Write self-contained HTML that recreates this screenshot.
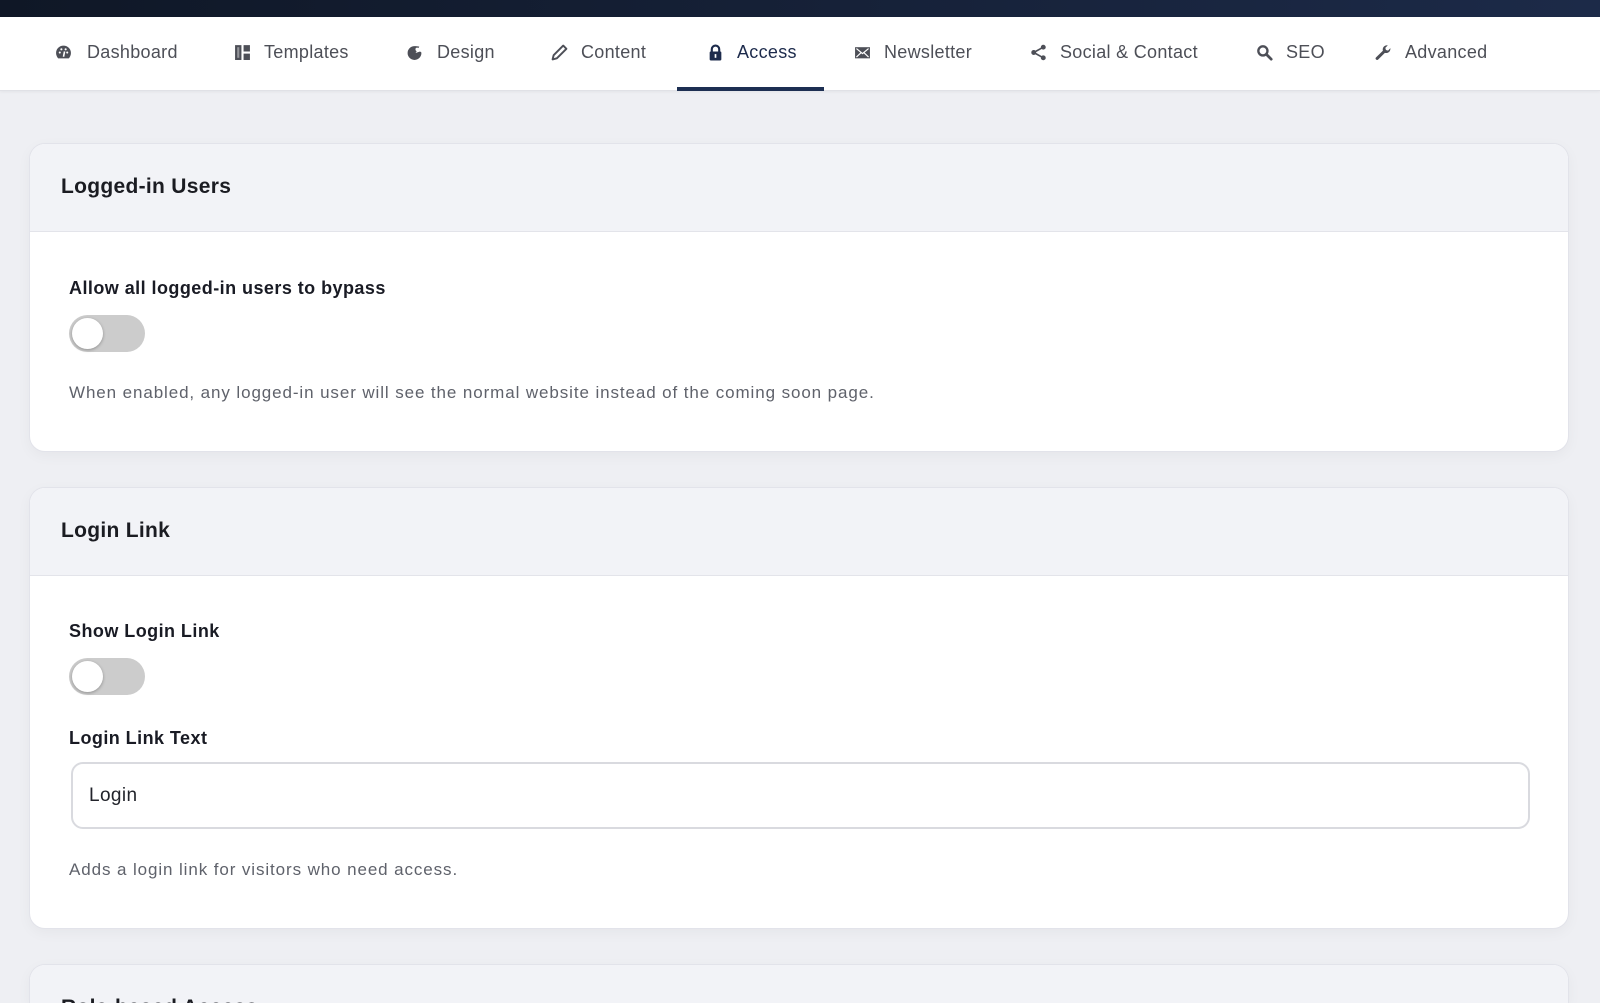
<!DOCTYPE html>
<html><head><meta charset="utf-8"><style>
*{box-sizing:border-box;margin:0;padding:0}
html{width:1600px;height:1003px;overflow:hidden}
body{width:1600px;height:1003px;overflow:hidden;background:#eeeff3;font-family:"Liberation Sans",sans-serif;position:relative}
.top{position:absolute;left:0;top:0;width:1600px;height:17px;background:linear-gradient(90deg,#0f1726,#1c2a48)}
.nav{position:absolute;left:0;top:17px;width:1600px;height:74px;background:#fff;border-bottom:1px solid #e0e1e6;box-shadow:0 1px 3px rgba(0,0,0,.05)}
.it{position:absolute;top:0;height:74px;line-height:70px;font-size:18px;color:#4d4f57;white-space:nowrap;letter-spacing:.3px}
.it svg{position:absolute;top:27px;width:17px;height:17px}
.it span{position:absolute;top:0}
.act{color:#1d2b4c}
.ul{position:absolute;left:677px;width:147px;height:4px;background:#1d2f52}
.card{position:absolute;left:29px;width:1540px;background:#fff;border:1px solid #e2e3ea;border-radius:16px;overflow:hidden;box-shadow:0 4px 14px rgba(0,0,0,.04)}
.hd{height:88px;background:#f2f3f7;border-bottom:1px solid #e3e4ea;padding-left:31px;line-height:86px;font-size:21px;font-weight:bold;color:#1b1c22;letter-spacing:.3px}
.lab{position:absolute;left:39px;font-size:18px;font-weight:bold;color:#191b24;letter-spacing:.45px}
.tog{position:absolute;left:39px;width:76px;height:37px;border-radius:19px;background:#cccccc}
.tog:after{content:"";position:absolute;left:3px;top:3px;width:31px;height:31px;border-radius:50%;background:#fff;box-shadow:0 1px 3px rgba(0,0,0,.3)}
.help{position:absolute;left:39px;font-size:17px;color:#5f626b;letter-spacing:.9px}
.inp{position:absolute;left:41px;width:1459px;height:67px;border:2px solid #d9dadf;border-radius:12px;font-size:19px;color:#22242b;padding-left:16px;line-height:63px;letter-spacing:.4px}
</style></head><body>
<div class="top"></div>
<div class="nav">
<div class="it" style="left:55px"><svg viewBox="0 0 16 16"><path d="M8 1.5A7 7 0 0 0 1 8.5c0 2 .8 3.7 2 5h10c1.2-1.3 2-3 2-5a7 7 0 0 0-7-7z" fill="#4d4f57"/><circle cx="4.5" cy="8" r="1" fill="#fff"/><circle cx="6" cy="5" r="1" fill="#fff"/><circle cx="11.5" cy="8" r="1" fill="#fff"/><circle cx="10" cy="5" r="1" fill="#fff"/><path d="M8 12l1-5" stroke="#fff" stroke-width="1.5"/></svg><span style="left:32px">Dashboard</span></div>
<div class="it" style="left:234px"><svg viewBox="0 0 16 16"><path d="M1 1h6v14H1zM9 1h6v6H9zM9 9h6v6H9z" fill="#4d4f57"/><path d="M3 3h2v10H3z" fill="#fff" opacity=".4"/></svg><span style="left:30px">Templates</span></div>
<div class="it" style="left:406px"><svg viewBox="0 0 16 16"><path d="M8 2a6.5 6.5 0 1 0 6.5 6.5c0-1-1-1.5-2-1.2L9 8.5 12.5 2.5C11 2 9.5 2 8 2z" fill="#4d4f57"/><circle cx="10.5" cy="5" r="1.6" fill="#fff"/></svg><span style="left:31px">Design</span></div>
<div class="it" style="left:551px"><svg viewBox="0 0 16 16"><path d="M11.5 1.5l3 3-9 9-4 1 1-4z" fill="none" stroke="#4d4f57" stroke-width="1.8" stroke-linejoin="round"/></svg><span style="left:30px">Content</span></div>
<div class="it act" style="left:707px"><svg viewBox="0 0 16 16"><path d="M4.5 7V5a3.5 3.5 0 0 1 7 0v2" fill="none" stroke="#1d2b4c" stroke-width="2"/><rect x="2.5" y="7" width="11" height="8.5" rx="1" fill="#1d2b4c"/><rect x="7.2" y="9.5" width="1.6" height="3.5" fill="#fff"/></svg><span style="left:30px">Access</span></div>
<div class="it" style="left:854px"><svg viewBox="0 0 16 16"><rect x="1" y="3" width="14" height="10.5" fill="#4d4f57"/><path d="M2.3 4.3L8 9l5.7-4.7M2.3 12.3l4.2-4M13.7 12.3l-4.2-4" stroke="#fff" stroke-width="1.1" fill="none"/></svg><span style="left:30px">Newsletter</span></div>
<div class="it" style="left:1030px"><svg viewBox="0 0 16 16"><circle cx="12.5" cy="3" r="2.3" fill="#4d4f57"/><circle cx="3.5" cy="8" r="2.3" fill="#4d4f57"/><circle cx="12.5" cy="13" r="2.3" fill="#4d4f57"/><path d="M12.5 3L3.5 8l9 5" stroke="#4d4f57" stroke-width="1.6" fill="none"/></svg><span style="left:30px">Social &amp; Contact</span></div>
<div class="it" style="left:1256px"><svg viewBox="0 0 16 16"><circle cx="6.5" cy="6.5" r="4.3" fill="none" stroke="#4d4f57" stroke-width="2.2"/><path d="M9.8 9.8l4.5 4.5" stroke="#4d4f57" stroke-width="2.6" stroke-linecap="round"/></svg><span style="left:30px">SEO</span></div>
<div class="it" style="left:1375px"><svg viewBox="0 0 16 16"><path d="M14.5 4.5a4 4 0 0 1-5.2 3.8L3 14.6a1.4 1.4 0 0 1-2-2L7.4 6.3a4 4 0 0 1 4.6-5L9.7 3.6l.6 2 2 .6 2.2-2.3z" fill="#4d4f57"/></svg><span style="left:30px">Advanced</span></div>
<div class="ul" style="top:70px"></div>
</div>
<div class="card" style="top:143px;height:309px">
<div class="hd">Logged-in Users</div>
<div class="lab" style="top:134px">Allow all logged-in users to bypass</div>
<div class="tog" style="top:171px"></div>
<div class="help" style="top:239px">When enabled, any logged-in user will see the normal website instead of the coming soon page.</div>
</div>
<div class="card" style="top:487px;height:442px">
<div class="hd">Login Link</div>
<div class="lab" style="top:133px">Show Login Link</div>
<div class="tog" style="top:170px"></div>
<div class="lab" style="top:240px">Login Link Text</div>
<div class="inp" style="top:274px">Login</div>
<div class="help" style="top:372px">Adds a login link for visitors who need access.</div>
</div>
<div class="card" style="top:964px;height:39px;border-bottom:none;border-radius:16px 16px 0 0">
<div class="hd">Role-based Access</div>
</div>
</body></html>
